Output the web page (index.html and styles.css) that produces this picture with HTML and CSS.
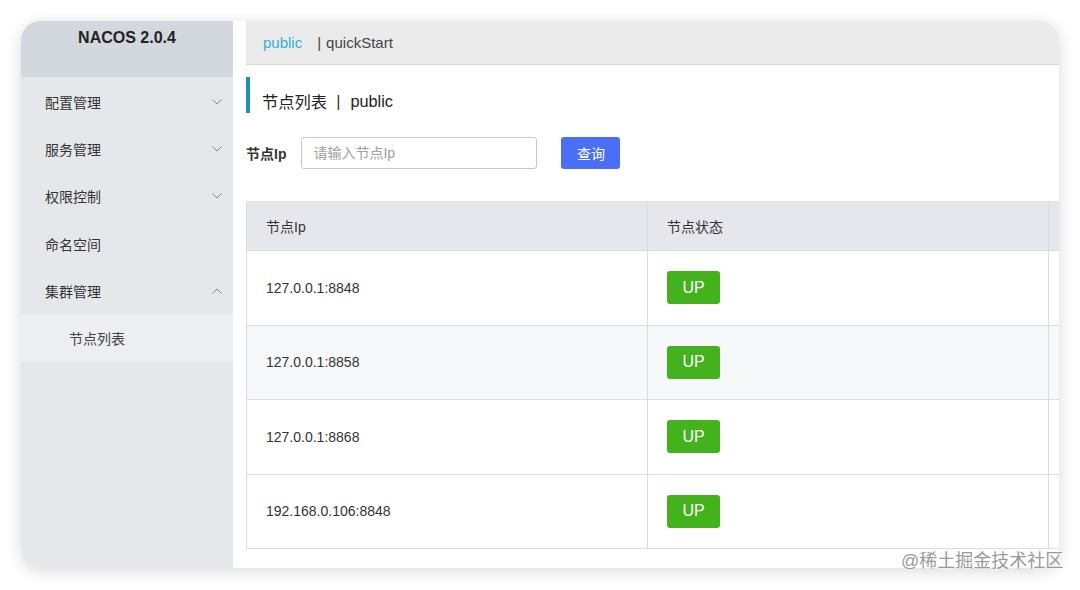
FILE: index.html
```html
<!DOCTYPE html>
<html lang="zh-CN">
<head>
<meta charset="utf-8">
<title>NACOS 2.0.4</title>
<link rel="stylesheet" href="styles.css">
</head>
<body>
<div class="window">
  <aside class="sidebar">
    <div class="brand">NACOS 2.0.4</div>
    <ul class="menu">
      <li class="menu-item"><span>配置管理</span><svg class="chev" viewBox="0 0 10 6"><path d="M0.5 0.5 L5 5 L9.5 0.5"/></svg></li>
      <li class="menu-item"><span>服务管理</span><svg class="chev" viewBox="0 0 10 6"><path d="M0.5 0.5 L5 5 L9.5 0.5"/></svg></li>
      <li class="menu-item"><span>权限控制</span><svg class="chev" viewBox="0 0 10 6"><path d="M0.5 0.5 L5 5 L9.5 0.5"/></svg></li>
      <li class="menu-item"><span>命名空间</span></li>
      <li class="menu-item"><span>集群管理</span><svg class="chev" viewBox="0 0 10 6"><path d="M0.5 5.5 L5 1 L9.5 5.5"/></svg></li>
      <li class="sub-item">节点列表</li>
    </ul>
  </aside>
  <main class="main">
    <div class="topbar">
      <span class="ns-active">public</span>
      <span class="ns"><span class="pipe">|</span>quickStart</span>
    </div>
    <h2 class="page-title">节点列表<span class="title-sep">|</span>public</h2>
    <div class="search">
      <label class="search-label">节点Ip</label>
      <input class="search-input" type="text" placeholder="请输入节点Ip">
      <button class="btn-primary">查询</button>
    </div>
    <div class="table">
      <div class="row head">
        <div class="cell">节点Ip</div>
        <div class="cell">节点状态</div>
        <div class="cell last"></div>
      </div>
      <div class="row">
        <div class="cell">127.0.0.1:8848</div>
        <div class="cell"><span class="badge">UP</span></div>
        <div class="cell last"></div>
      </div>
      <div class="row alt">
        <div class="cell">127.0.0.1:8858</div>
        <div class="cell"><span class="badge">UP</span></div>
        <div class="cell last"></div>
      </div>
      <div class="row">
        <div class="cell">127.0.0.1:8868</div>
        <div class="cell"><span class="badge">UP</span></div>
        <div class="cell last"></div>
      </div>
      <div class="row">
        <div class="cell">192.168.0.106:8848</div>
        <div class="cell"><span class="badge">UP</span></div>
        <div class="cell last"></div>
      </div>
    </div>
  </main>
</div>
<div class="watermark">@稀土掘金技术社区</div>
</body>
</html>
```
FILE: styles.css
```css
* { box-sizing: border-box; }
html, body {
  margin: 0;
  padding: 0;
  background: #ffffff;
  width: 1080px;
  height: 590px;
  overflow: hidden;
  font-family: "Liberation Sans", "Noto Sans CJK SC", sans-serif;
  color: #333;
}
body { position: relative; }

.window {
  margin: 21px 0 0 21px;
  width: 1038px;
  height: 547px;
  border-radius: 20px;
  overflow: hidden;
  display: flex;
  background: #fff;
  box-shadow: 0 3px 16px rgba(0, 0, 0, 0.15);
}

/* sidebar */
.sidebar {
  width: 212px;
  flex: none;
  background: #e5e8eb;
}
.brand {
  height: 56px;
  background: #d3d8de;
  text-align: center;
  font-weight: bold;
  font-size: 16px;
  line-height: 20px;
  padding-top: 7px;
  color: #222;
}
.menu {
  list-style: none;
  margin: 0;
  padding: 1px 0 0;
}
.menu-item {
  height: 47.3px;
  display: flex;
  align-items: center;
  justify-content: space-between;
  padding: 0 11px 0 24px;
  font-size: 14px;
  color: #333;
}
.chev {
  width: 10px;
  height: 6px;
  fill: none;
  stroke: #888;
  stroke-width: 1;
}
.sub-item {
  height: 47px;
  display: flex;
  align-items: center;
  padding-left: 48px;
  font-size: 14px;
  color: #444;
  background: #eceef1;
}

/* main */
.main {
  flex: 1;
  padding-left: 13px;
  background: #fff;
  min-width: 0;
}
.topbar {
  height: 44px;
  background: #ebebeb;
  border-bottom: 1px solid #d7d7d7;
  display: flex;
  align-items: center;
  padding-left: 17px;
  font-size: 15px;
  gap: 15px;
}
.ns-active { color: #2fb0d3; }
.ns { color: #444; }
.pipe { margin-right: 5px; }

.page-title {
  margin: 12px 0 0;
  height: 36px;
  border-left: 4px solid #1f8ec2;
  padding: 12px 0 0 12px;
  display: flex;
  align-items: center;
  font-size: 16.3px;
  font-weight: normal;
  color: #222;
}
.title-sep {
  margin: 0 10px 0 9px;
  color: #333;
}

.search {
  margin-top: 24px;
  height: 32px;
  display: flex;
  align-items: center;
}
.search-label {
  font-size: 14px;
  font-weight: bold;
  color: #333;
  margin-right: 15px;
}
.search-input {
  width: 236px;
  height: 32px;
  border: 1px solid #c8c8c8;
  border-radius: 3px;
  padding: 0 11px;
  font-size: 14px;
  font-family: inherit;
  color: #333;
  outline: none;
}
.search-input::placeholder { color: #a0a0a0; }
.btn-primary {
  margin-left: 24px;
  width: 59px;
  height: 32px;
  border: none;
  border-radius: 3px;
  background: #4a6ef5;
  color: #fff;
  font-size: 14px;
  font-family: inherit;
}

.table {
  margin-top: 32px;
  border-left: 1px solid #dcdcdc;
  border-top: 1px solid #e3e3e3;
}
.row {
  display: grid;
  grid-template-columns: 401px 401px 1fr;
  height: 74.5px;
  border-bottom: 1px solid #dcdcdc;
  background: #fff;
}
.row.head {
  height: 49px;
  background: #e5e7ed;
}
.row.alt { background: #f7f8fa; }
.cell {
  display: flex;
  align-items: center;
  padding-left: 19px;
  font-size: 14px;
  color: #333;
  border-right: 1px solid #dcdcdc;
}
.row.head .cell { padding-bottom: 1px; }
.cell.last { border-right: none; }
.badge {
  display: inline-flex;
  align-items: center;
  justify-content: center;
  width: 53px;
  height: 33px;
  border-radius: 3px;
  background: #43b21c;
  color: #fff;
  font-size: 16px;
}

.watermark {
  position: absolute;
  left: 901px;
  top: 550px;
  font-size: 18px;
  line-height: 22px;
  color: #9a9a9a;
  text-shadow: 0 0 2px #fff, 0 0 2px #fff;
  white-space: nowrap;
}
```
